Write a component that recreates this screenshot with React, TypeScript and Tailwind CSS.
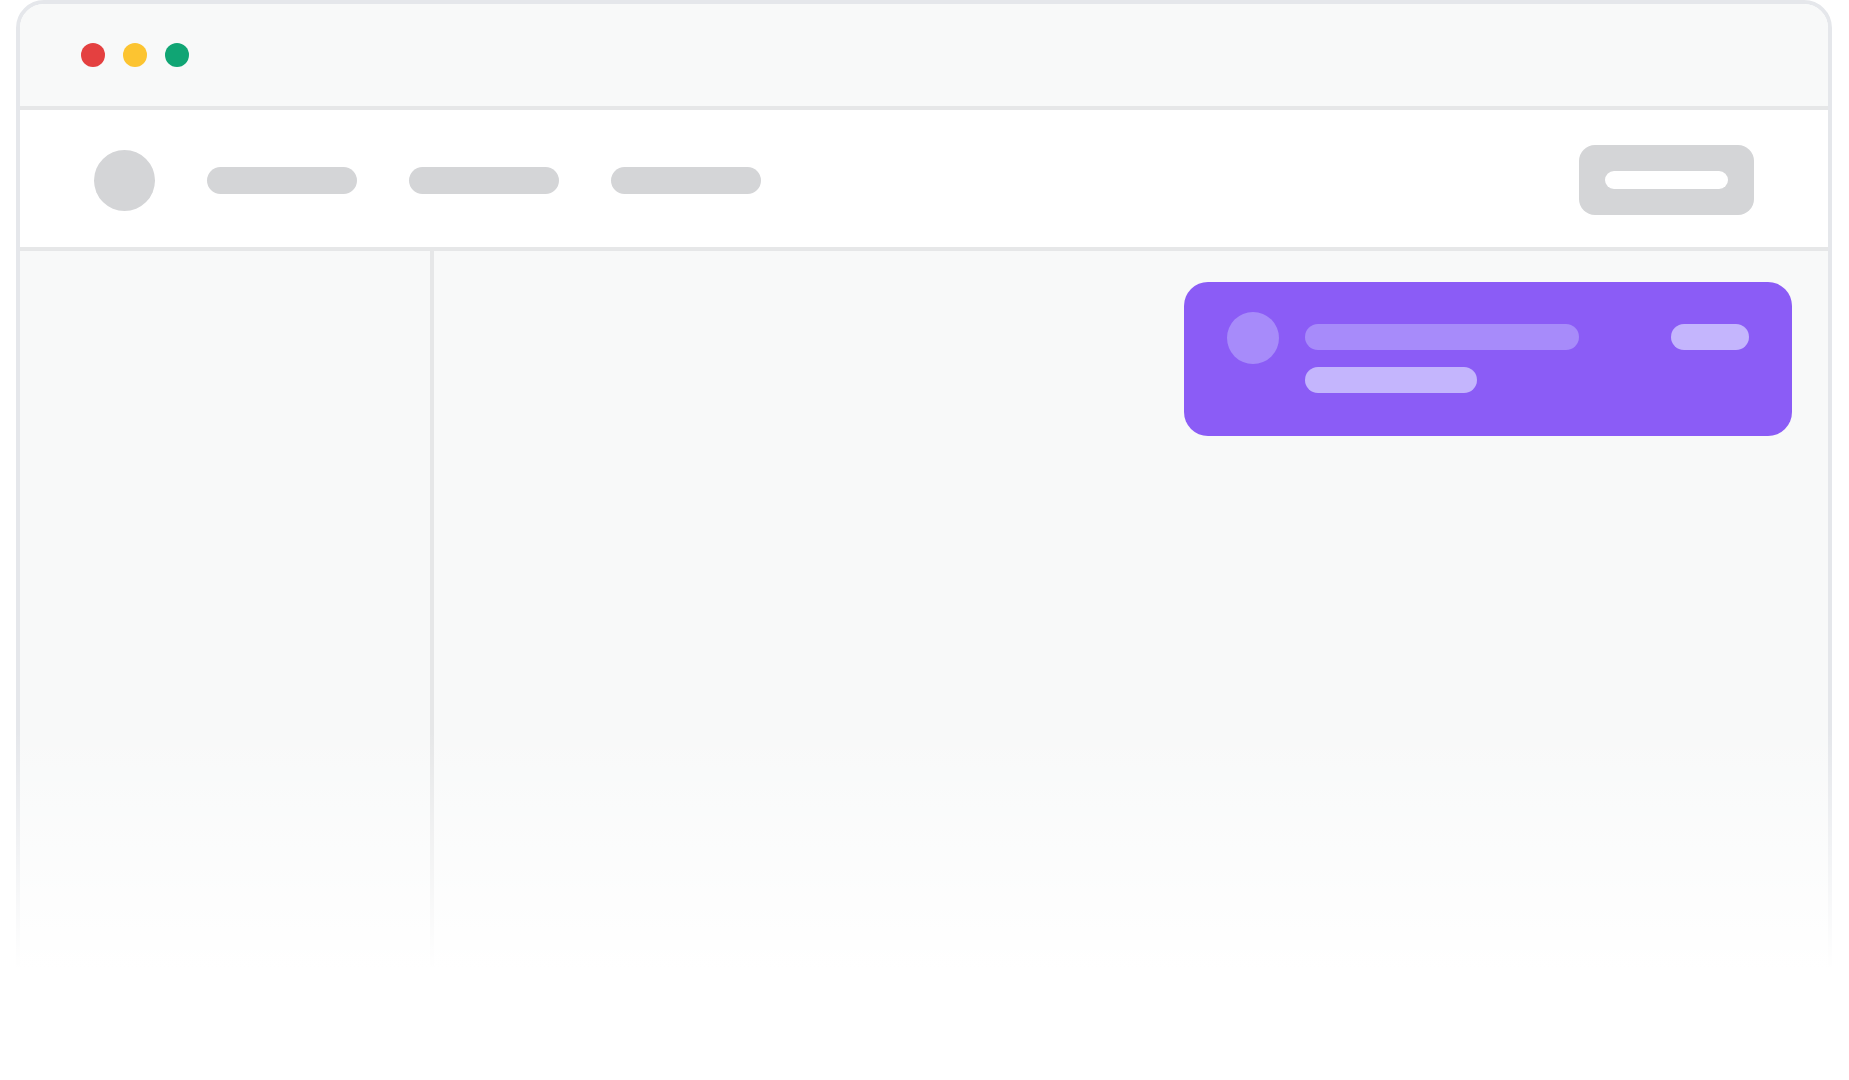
import React from "react";

export default function App() {
  return (
    <div className="relative w-[1849px] h-[1080px] overflow-hidden bg-white" style={{ fontFamily: "Inter, 'Liberation Sans', sans-serif" }}>
      <div className="ml-[16px] w-[1816px] h-[1100px] rounded-t-[28px] border-4 border-[#e5e7eb] overflow-hidden flex flex-col">
        {/* title bar */}
        <div className="h-[102px] shrink-0 bg-[#f8f9f9] flex items-center pl-[61px] gap-[18px] border-b-4 border-[#e6e7e8] box-content">
          <div className="w-[24px] h-[24px] rounded-full bg-[#e44040]" />
          <div className="w-[24px] h-[24px] rounded-full bg-[#fcc431]" />
          <div className="w-[24px] h-[24px] rounded-full bg-[#10a574]" />
        </div>
        {/* nav bar */}
        <div className="h-[134px] pt-[3px] shrink-0 bg-white flex items-center justify-between px-[74px] border-b-4 border-[#e6e7e8] box-content">
          <div className="flex items-center gap-[52px]">
            <div className="w-[61px] h-[61px] rounded-full bg-[#d4d5d7]" />
            <div className="w-[150px] h-[27px] rounded-full bg-[#d4d5d7]" />
            <div className="w-[150px] h-[27px] rounded-full bg-[#d4d5d7]" />
            <div className="w-[150px] h-[27px] rounded-full bg-[#d4d5d7]" />
          </div>
          <div className="w-[175px] h-[70px] rounded-[16px] bg-[#d4d5d7] flex items-center justify-center">
            <div className="w-[123px] h-[18px] rounded-full bg-white" />
          </div>
        </div>
        {/* body */}
        <div className="flex-1 flex bg-[#f8f9f9]">
          <div className="w-[410px] shrink-0 border-r-4 border-[#e6e7e8] box-content" />
          <div className="flex-1 flex justify-end items-start pt-[31px] pr-[36px]">
            <div className="w-[608px] h-[154px] rounded-[24px] bg-[#8b5cf6] flex items-start gap-[26px] px-[43px] pt-[30px]">
              <div className="w-[52px] h-[52px] rounded-full bg-[#a78bfa] shrink-0" />
              <div className="flex-1 flex flex-col pt-[12px] gap-[17px]">
                <div className="flex justify-between">
                  <div className="w-[274px] h-[26px] rounded-full bg-[#a78bfa]" />
                  <div className="w-[78px] h-[26px] rounded-full bg-[#c4b5fd]" />
                </div>
                <div className="w-[172px] h-[26px] rounded-full bg-[#c4b5fd]" />
              </div>
            </div>
          </div>
        </div>
      </div>
      {/* bottom fade overlay */}
      <div className="absolute left-0 right-0 top-[730px] h-[240px] bg-linear-to-b from-white/0 to-white" />
      <div className="absolute left-0 right-0 top-[968px] bottom-0 bg-white" />
    </div>
  );
}
